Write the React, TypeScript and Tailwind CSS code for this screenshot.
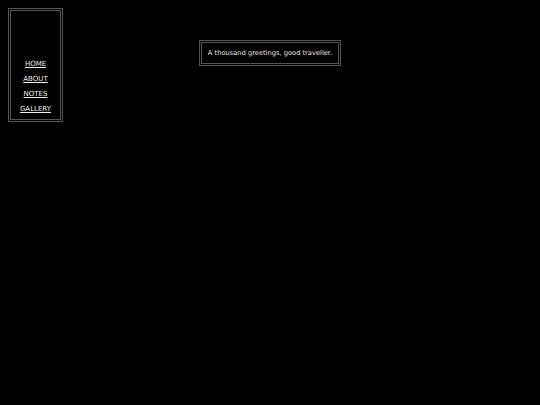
export default function App() {
  const links = ['HOME', 'ABOUT', 'NOTES', 'GALLERY'];
  return (
    <div className="min-h-[405px] bg-black p-2 text-[7px] text-[#e6e6e6] [font-family:'DejaVu_Sans',Verdana,sans-serif]">
      <div className="grid grid-cols-[1fr_auto_1fr] items-start">
        <nav className="justify-self-start w-[55px] border-[3px] border-double border-[#555555] pt-[46px] pb-[2px]">
          <ul className="flex flex-col items-center">
            {links.map((l) => (
              <li key={l} className="leading-[15px]">
                <a href="#" className="underline text-[#eeeeee]">{l}</a>
              </li>
            ))}
          </ul>
        </nav>
        <div className="mt-8 border-[3px] border-double border-[#555555] px-[6px] text-[6.7px] leading-[20px]">
          A thousand greetings, good traveller.
        </div>
        <div />
      </div>
    </div>
  );
}
